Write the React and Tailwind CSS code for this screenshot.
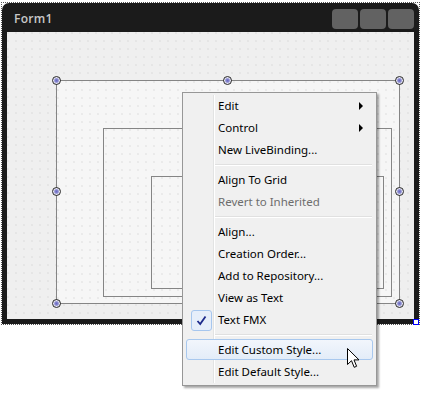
import React from 'react';

const grid =
  'bg-[radial-gradient(circle_at_1px_1px,#d0d0d0_0.5px,transparent_0.8px)] bg-[length:8px_8px]';

function Handle({ className }) {
  return (
    <span
      className={`absolute w-[9px] h-[9px] rounded-full border border-[#2a2a2a] bg-[radial-gradient(circle,#6a6ac4_0,#8a8ad0_35%,#e6e6f2_60%,#d0d0e0_100%)] ${className}`}
    />
  );
}

function Arrow() {
  return (
    <svg width="5" height="8" viewBox="0 0 5 8" className="mr-[10px]">
      <path d="M0 0 L4 4 L0 8 Z" fill="#000" />
    </svg>
  );
}

function Item({ label, sub, disabled, checked, hot }) {
  return (
    <div className="relative h-[22px] flex items-center">
      {hot && (
        <div className="absolute left-[1px] right-[1px] top-0 bottom-[1px] rounded-[3px] border border-[#a8c8ee] bg-[linear-gradient(#f2f6fc,#e3ecf8)]" />
      )}
      <div className="relative w-[32px] h-full flex items-center justify-center">
        {checked && (
          <div className="w-[21px] h-[21px] rounded-[3px] border border-[#a6c6ee] bg-[#e6eefa] flex items-center justify-center">
            <svg width="11" height="11" viewBox="0 0 11 11">
              <path d="M1.5 6 L4.2 9 L9.5 1.5" fill="none" stroke="#1e2b8c" strokeWidth="1.8" />
            </svg>
          </div>
        )}
      </div>
      <span
        className={`relative flex-1 pl-[1px] ${disabled ? 'text-[#6d6d6d]' : 'text-black'}`}
      >
        {label}
      </span>
      {sub && <Arrow />}
    </div>
  );
}

function Sep() {
  return (
    <div className="h-[8px] flex items-center pl-[30px] pr-[2px]">
      <div className="flex-1 h-[2px] border-t border-[#e0e0e0] border-b border-b-white" />
    </div>
  );
}

export default function App() {
  return (
    <div className="relative w-[438px] h-[413px] bg-white overflow-hidden font-['Noto_Sans',sans-serif]">
      {/* designer window */}
      <div className="absolute left-[1px] top-[2px] w-[419px] h-[323px] border border-dotted border-[#555] p-0">
        <div className="w-full h-full rounded-t-[7px] bg-[#1b1b1b] flex flex-col px-[5px] pb-[5px]">
          <div className="h-[29px] flex items-start">
            <span className="mt-[9px] ml-[7px] text-[12px] font-semibold text-[#c8c8c8] tracking-[0.3px] leading-[14px] font-['Open_Sans',sans-serif]">
              Form1
            </span>
            <div className="ml-auto mt-[6px] flex gap-[2px]">
              <div className="w-[26px] h-[20px] rounded-[4px] bg-[#626262]" />
              <div className="w-[26px] h-[20px] rounded-[4px] bg-[#626262]" />
              <div className="w-[26px] h-[20px] rounded-[4px] bg-[#626262]" />
            </div>
          </div>
          <div className={`flex-1 bg-[#efefef] ${grid} pl-[49px] pt-[48px]`}>
            <div className="relative w-[344px] h-[224px] border border-[#858585] bg-[#f6f6f6] flex flex-col pl-[46px] pt-[47px] pr-[7px] pb-[6px]">
              <div className={`absolute inset-0 ${grid}`} />
              <div className="relative flex-1 border border-[#858585] flex flex-col pl-[47px] pt-[47px] pr-[7px] pb-[7px]">
                <div className="flex-1 border border-[#858585]" />
              </div>
              <Handle className="-left-[5px] -top-[5px]" />
              <Handle className="left-[166px] -top-[5px]" />
              <Handle className="-right-[5px] -top-[5px]" />
              <Handle className="-left-[5px] top-[106px]" />
              <Handle className="-right-[5px] top-[106px]" />
              <Handle className="-left-[5px] -bottom-[5px]" />
              <Handle className="left-[166px] -bottom-[5px]" />
              <Handle className="-right-[5px] -bottom-[5px]" />
            </div>
          </div>
        </div>
      </div>
      <div className="absolute left-[413px] top-[319px] w-[6px] h-[6px] bg-white border border-[#0000ff]" />

      {/* context menu */}
      <div className="absolute left-[182px] top-[92px] w-[195px] border border-[#979797] bg-[#f0f0f0] p-[2px] text-[11.5px] leading-[16px] shadow-[2px_2px_2px_rgba(0,0,0,0.35)]">
        <div className="absolute left-[30px] top-[2px] bottom-[2px] w-[2px] border-l border-[#e2e3e3] border-r border-r-white" />
        <Item label="Edit" sub />
        <Item label="Control" sub />
        <Item label="New LiveBinding..." />
        <Sep />
        <Item label="Align To Grid" />
        <Item label="Revert to Inherited" disabled />
        <Sep />
        <Item label="Align..." />
        <Item label="Creation Order..." />
        <Item label="Add to Repository..." />
        <Item label="View as Text" />
        <Item label="Text FMX" checked />
        <Sep />
        <Item label="Edit Custom Style..." hot />
        <Item label="Edit Default Style..." />
      </div>

      {/* mouse pointer */}
      <svg
        className="absolute left-[347px] top-[348px]"
        width="13"
        height="21"
        viewBox="0 0 13 21"
      >
        <path
          d="M0.5 0.5 L0.5 16.5 L4.5 12.7 L7.2 19.3 L9.6 18.3 L7 11.9 L12 11.9 Z"
          fill="#fff"
          stroke="#000"
          strokeWidth="1"
          strokeLinejoin="round"
        />
      </svg>
    </div>
  );
}
